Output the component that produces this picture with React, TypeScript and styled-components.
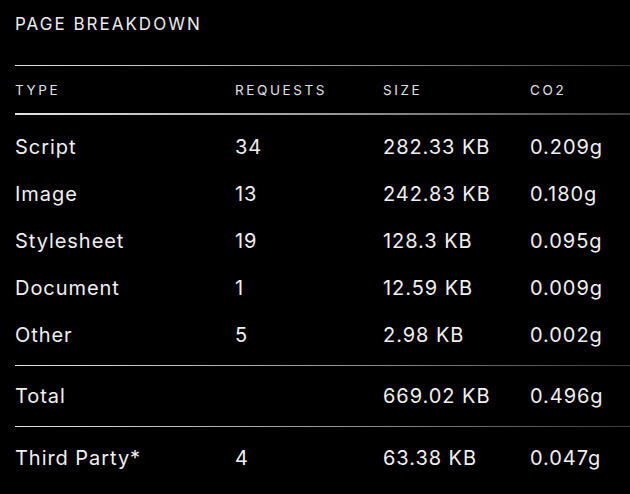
import React from "react";
import styled, { createGlobalStyle } from "styled-components";

const Global = createGlobalStyle`
  html, body { margin: 0; padding: 0; background: #000; }
  body { font-family: Inter, "Noto Sans", sans-serif; color: #ececec; }
`;

const Panel = styled.section`
  width: 630px;
  height: 494px;
  box-sizing: border-box;
  padding-left: 15px;
  background: #000;
  overflow: hidden;
`;

const Title = styled.h2`
  margin: 0;
  padding-top: 13px;
  height: 65px;
  box-sizing: border-box;
  font-size: 17px;
  font-weight: 400;
  letter-spacing: 2px;
  line-height: 22px;
  color: #ececec;
`;

const Rule = styled.div<{ $thick?: boolean }>`
  height: ${(p) => (p.$thick ? 2 : 1)}px;
  background: linear-gradient(to right, #e4e4e4 0%, #8a8a8a 60%, #3a3a3a 100%);
`;

const Row = styled.div<{ $h: number }>`
  display: grid;
  grid-template-columns: 220px 148px 147px 1fr;
  align-items: center;
  height: ${(p) => p.$h}px;
`;

const HeadCell = styled.span`
  font-size: 13.5px;
  letter-spacing: 2.6px;
  color: #e0e0e0;
`;

const Cell = styled.span`
  font-size: 20px;
  letter-spacing: 0.95px;
  color: #f0f0f0;
`;

const Group = styled.div`
  padding: 8px 0 7px;
`;

const rows = [
  ["Script", "34", "282.33 KB", "0.209g"],
  ["Image", "13", "242.83 KB", "0.180g"],
  ["Stylesheet", "19", "128.3 KB", "0.095g"],
  ["Document", "1", "12.59 KB", "0.009g"],
  ["Other", "5", "2.98 KB", "0.002g"],
];

export default function App() {
  return (
    <>
      <Global />
      <Panel>
        <Title>PAGE BREAKDOWN</Title>
        <Rule />
        <Row $h={47}>
          <HeadCell>TYPE</HeadCell>
          <HeadCell>REQUESTS</HeadCell>
          <HeadCell>SIZE</HeadCell>
          <HeadCell>CO2</HeadCell>
        </Row>
        <Rule $thick />
        <Group>
          {rows.map((r) => (
            <Row $h={47} key={r[0]}>
              {r.map((c, i) => (
                <Cell key={i}>{c}</Cell>
              ))}
            </Row>
          ))}
        </Group>
        <Rule />
        <Row $h={60}>
          <Cell>Total</Cell>
          <Cell />
          <Cell>669.02 KB</Cell>
          <Cell>0.496g</Cell>
        </Row>
        <Rule />
        <Row $h={62}>
          <Cell>Third Party*</Cell>
          <Cell>4</Cell>
          <Cell>63.38 KB</Cell>
          <Cell>0.047g</Cell>
        </Row>
      </Panel>
    </>
  );
}
